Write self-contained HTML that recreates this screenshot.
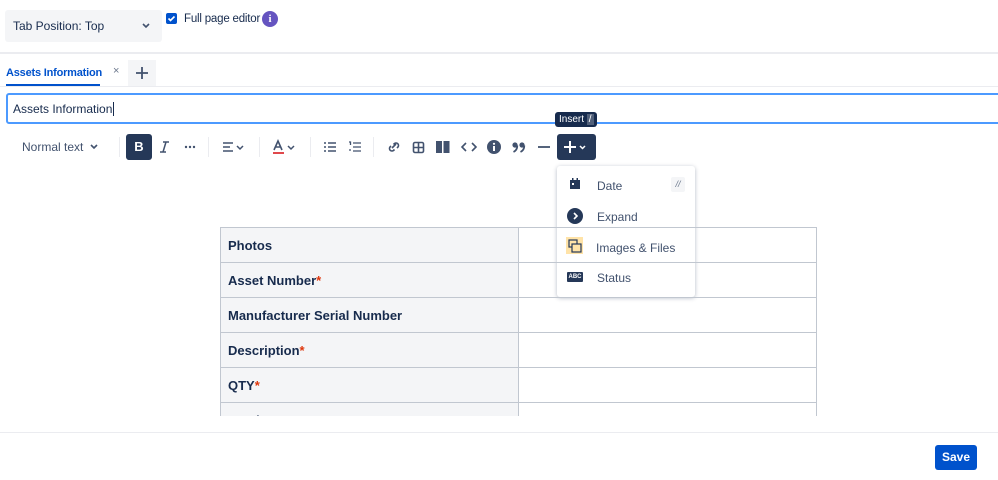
<!DOCTYPE html>
<html><head><meta charset="utf-8"><style>
*{box-sizing:border-box;margin:0;padding:0}
body{width:998px;height:480px;background:#fff;font-family:"Liberation Sans",sans-serif;color:#172b4d;position:relative;overflow:hidden;font-size:12px}
.a{position:absolute}
svg{display:block}
.ic{position:absolute;top:138px}
.sep{position:absolute;top:137px;width:1px;height:20px;background:#ebecf0}
td{border:1px solid #c1c7d0;height:35px;padding:0 7px;font-weight:bold;font-size:13px;vertical-align:middle}
td.h{background:#f4f5f7}
.r{color:#de350b}
.mi{position:absolute;left:0;width:138px;height:30px;font-size:12px;color:#42526e}
</style></head><body>
<div class="a" style="left:5px;top:10px;width:157px;height:32px;background:#f4f5f7;border-radius:3px"></div>
<div class="a" style="left:13px;top:19px;font-size:12px;color:#172b4d">Tab Position: Top</div>
<svg class="a" style="left:141px;top:22px" width="10" height="8"><path d="M2 2l3 3 3-3" stroke="#42526e" stroke-width="1.6" fill="none"/></svg>
<div class="a" style="left:166px;top:13px;width:11px;height:11px;background:#0052cc;border-radius:2px"></div>
<svg class="a" style="left:166px;top:13px" width="11" height="11"><path d="M2.5 5.5l2 2 4-4" stroke="#fff" stroke-width="1.6" fill="none"/></svg>
<div class="a" style="left:184px;top:13px;font-size:11.5px;letter-spacing:-0.2px">Full page editor</div>
<div class="a" style="left:262px;top:11px;width:16px;height:16px;border-radius:50%;background:#6554c0;color:#fff;font-weight:bold;font-size:11px;text-align:center;line-height:16px;font-family:'Liberation Serif',serif">i</div>
<div class="a" style="left:0;top:52px;width:998px;height:2px;background:#ebecf0"></div>
<div class="a" style="left:6px;top:67px;font-size:11px;color:#0052cc;font-weight:bold;letter-spacing:-0.2px">Assets Information</div>
<div class="a" style="left:6px;top:84px;width:94px;height:2px;background:#0052cc"></div>
<div class="a" style="left:113px;top:65px;font-size:11px;color:#6b778c">×</div>
<div class="a" style="left:128px;top:60px;width:28px;height:26px;background:#f4f5f7"></div>
<svg class="a" style="left:135px;top:66px" width="14" height="14"><path d="M7 1v12M1 7h12" stroke="#42526e" stroke-width="1.8"/></svg>
<div class="a" style="left:0;top:86px;width:998px;height:1px;background:#ebecf0"></div>
<div class="a" style="left:6px;top:93px;width:1000px;height:31px;border:2px solid #4c9aff;border-radius:3px"></div>
<div class="a" style="left:13px;top:102px;font-size:12px">Assets Information<span style="border-left:1px solid #172b4d;margin-left:1px"></span></div>
<div class="a" style="left:555px;top:112px;width:42px;height:15px;background:#172b4d;border-radius:3px;color:#fff;font-size:10px;line-height:15px;padding-left:4px">Insert <span style="background:#505f79;padding:0 2px">/</span></div>
<div class="a" style="left:22px;top:140px;font-size:12px;color:#42526e">Normal text</div>
<svg class="a" style="left:89px;top:143px" width="10" height="8"><path d="M2 2l3 3 3-3" stroke="#42526e" stroke-width="1.6" fill="none"/></svg>
<div class="sep" style="left:119px"></div>
<div class="a" style="left:126px;top:134px;width:26px;height:26px;background:#253858;border-radius:3px;color:#fff;font-weight:bold;font-size:13px;text-align:center;line-height:26px">B</div>
<svg class="ic" style="left:157px" width="14" height="18"><path d="M6 4h6M3 14h6M9 4l-3 10" stroke="#42526e" stroke-width="1.5" fill="none"/></svg>
<svg class="ic" style="left:183px" width="14" height="18"><circle cx="3" cy="9" r="1.2" fill="#42526e"/><circle cx="7" cy="9" r="1.2" fill="#42526e"/><circle cx="11" cy="9" r="1.2" fill="#42526e"/></svg>
<div class="sep" style="left:208px"></div>
<svg class="ic" style="left:221px" width="26" height="18"><path d="M2 5h10M2 9h7M2 13h10" stroke="#42526e" stroke-width="1.6"/><path d="M16 8l3 3 3-3" stroke="#42526e" stroke-width="1.5" fill="none"/></svg>
<div class="sep" style="left:259px"></div>
<svg class="ic" style="left:271px" width="26" height="18"><path d="M3 12l4-9 4 9M4.5 9h5" stroke="#42526e" stroke-width="1.6" fill="none"/><rect x="2" y="14" width="11" height="2" fill="#e0484c"/><path d="M17 8l3 3 3-3" stroke="#42526e" stroke-width="1.5" fill="none"/></svg>
<div class="sep" style="left:310px"></div>
<svg class="ic" style="left:322px" width="16" height="18"><path d="M6 5h8M6 9h8M6 13h8" stroke="#42526e" stroke-width="1.5"/><circle cx="3" cy="5" r="1" fill="#42526e"/><circle cx="3" cy="9" r="1" fill="#42526e"/><circle cx="3" cy="13" r="1" fill="#42526e"/></svg>
<svg class="ic" style="left:347px" width="16" height="18"><path d="M6 5h8M6 9h8M6 13h8M2 4h1.5v3M2 12h2" stroke="#42526e" stroke-width="1.3" fill="none"/></svg>
<div class="sep" style="left:373px"></div>
<svg class="ic" style="left:386px" width="16" height="18"><path d="M6 10l4-4M5 8l-1 1a2.5 2.5 0 003.5 3.5l1-1M11 10l1-1A2.5 2.5 0 008.5 5.5l-1 1" stroke="#42526e" stroke-width="1.6" fill="none"/></svg>
<svg class="ic" style="left:411px" width="16" height="18"><rect x="2.5" y="4.5" width="10" height="10" rx="1.5" stroke="#42526e" stroke-width="1.6" fill="none"/><path d="M7.5 4.5v10M2.5 9.5h10" stroke="#42526e" stroke-width="1.6"/></svg>
<svg class="ic" style="left:435px" width="16" height="18"><rect x="1" y="3" width="6" height="12" fill="#42526e"/><rect x="8.5" y="3" width="6" height="12" fill="#42526e"/></svg>
<svg class="ic" style="left:460px" width="18" height="18"><path d="M6 5l-4 4 4 4M12 5l4 4-4 4" stroke="#42526e" stroke-width="1.6" fill="none"/></svg>
<svg class="ic" style="left:486px" width="16" height="18"><circle cx="8" cy="9" r="7" fill="#42526e"/><rect x="7" y="8" width="2" height="5" fill="#fff"/><circle cx="8" cy="5.8" r="1.1" fill="#fff"/></svg>
<svg class="ic" style="left:511px" width="16" height="18"><circle cx="4" cy="7" r="2.6" fill="#42526e"/><path d="M6.3 7.5C6.3 11 4.5 13 2.5 14" stroke="#42526e" stroke-width="1.8" fill="none"/><circle cx="11" cy="7" r="2.6" fill="#42526e"/><path d="M13.3 7.5C13.3 11 11.5 13 9.5 14" stroke="#42526e" stroke-width="1.8" fill="none"/></svg>
<svg class="ic" style="left:536px" width="16" height="18"><path d="M2 9h12" stroke="#42526e" stroke-width="1.8"/></svg>
<div class="a" style="left:557px;top:134px;width:39px;height:26px;background:#253858;border-radius:3px"></div>
<svg class="a" style="left:562px;top:139px" width="30" height="16"><path d="M8 2v12M2 8h12" stroke="#fff" stroke-width="2"/><path d="M18 7l2.5 2.5L23 7" stroke="#fff" stroke-width="1.5" fill="none"/></svg>
<div class="a" style="left:557px;top:166px;width:138px;height:131px;background:#fff;border-radius:3px;box-shadow:0 1px 4px rgba(9,30,66,.3)">
 <div class="mi" style="top:4px"><svg class="a" style="left:12px;top:8px" width="12" height="12"><rect x="1" y="2" width="10" height="9" fill="#253858"/><rect x="3" y="0" width="1.5" height="3" fill="#253858"/><rect x="7.5" y="0" width="1.5" height="3" fill="#253858"/><rect x="3" y="5" width="2" height="2" fill="#fff"/></svg><span class="a" style="left:40px;top:9px">Date</span><span class="a" style="left:114px;top:7px;width:14px;height:15px;background:#f4f5f7;border-radius:2px;font-size:9px;color:#6b778c;text-align:center;line-height:15px;font-style:italic">//</span></div>
 <div class="mi" style="top:35px"><div class="a" style="left:10px;top:7px;width:16px;height:16px;border-radius:50%;background:#253858"></div><svg class="a" style="left:10px;top:7px" width="16" height="16"><path d="M7 5l3 3-3 3" stroke="#fff" stroke-width="1.6" fill="none"/></svg><span class="a" style="left:40px;top:9px">Expand</span></div>
 <div class="mi" style="top:66px"><div class="a" style="left:9px;top:5px;width:17px;height:17px;background:#ffe3a8"></div><svg class="a" style="left:10px;top:6px" width="16" height="16"><rect x="2" y="2" width="8" height="7" stroke="#253858" stroke-width="1.2" fill="none"/><rect x="5" y="6" width="9" height="8" stroke="#253858" stroke-width="1.2" fill="#ffe3a8"/></svg><span class="a" style="left:39px;top:9px">Images &amp; Files</span></div>
 <div class="mi" style="top:96px"><div class="a" style="left:10px;top:10px;width:16px;height:10px;background:#253858;border-radius:1px;color:#fff;font-size:6px;font-weight:bold;text-align:center;line-height:10px">ABC</div><span class="a" style="left:40px;top:9px">Status</span></div>
</div>
<div class="a" style="left:220px;top:227px;width:597px;height:189px;overflow:hidden">
<table style="border-collapse:collapse;width:597px">
<tr><td class="h" style="width:298px">Photos</td><td></td></tr>
<tr><td class="h">Asset Number<span class="r">*</span></td><td></td></tr>
<tr><td class="h">Manufacturer Serial Number</td><td></td></tr>
<tr><td class="h">Description<span class="r">*</span></td><td></td></tr>
<tr><td class="h">QTY<span class="r">*</span></td><td></td></tr>
<tr><td class="h">Stock Status</td><td></td></tr>
</table></div>
<div class="a" style="left:0;top:432px;width:998px;height:1px;background:#ebecf0"></div>
<div class="a" style="left:935px;top:445px;width:42px;height:25px;background:#0052cc;border-radius:3px;color:#fff;font-weight:bold;font-size:12px;text-align:center;line-height:25px">Save</div>
</body></html>
